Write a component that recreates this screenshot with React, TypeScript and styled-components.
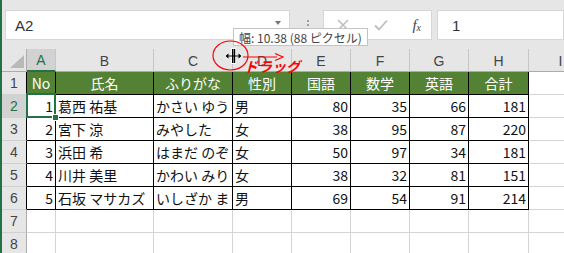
import { FC } from 'react'
import styled, { createGlobalStyle, css } from 'styled-components'

const colors = {
  chrome: '#e6e6e6',
  headActive: '#d2d2d2',
  excelGreen: '#217346',
  fill: '#548235',
  grid: '#d4d4d4',
  headLine: '#ababab',
  text: '#444444',
  red: '#ff0000',
}

const GlobalStyle = createGlobalStyle`
  body {
    margin: 0;
    background: ${colors.chrome};
    overflow: hidden;
  }
`

const columns = ['A', 'B', 'C', 'D', 'E', 'F', 'G', 'H', 'I']
const header = ['No', '氏名', 'ふりがな', '性別', '国語', '数学', '英語', '合計']

interface Student {
  no: number
  name: string
  kana: string
  sex: string
  jp: number
  math: number
  en: number
  total: number
}

const students: Student[] = [
  { no: 1, name: '葛西 祐基', kana: 'かさい ゆう', sex: '男', jp: 80, math: 35, en: 66, total: 181 },
  { no: 2, name: '宮下 涼', kana: 'みやした', sex: '女', jp: 38, math: 95, en: 87, total: 220 },
  { no: 3, name: '浜田 希', kana: 'はまだ のぞ', sex: '女', jp: 50, math: 97, en: 34, total: 181 },
  { no: 4, name: '川井 美里', kana: 'かわい みり', sex: '女', jp: 38, math: 32, en: 81, total: 151 },
  { no: 5, name: '石坂 マサカズ', kana: 'いしざか ま', sex: '男', jp: 69, math: 54, en: 91, total: 214 },
]

const App: FC = () => {
  return (
    <Window>
      <GlobalStyle />
      <FormulaRow>
        <NameBox>
          A2
          <DropArrow />
        </NameBox>
        <Grip>
          <Dot />
          <Dot />
          <Dot />
        </Grip>
        <ButtonBox>
          <svg width="12" height="12" viewBox="0 0 12 12">
            <path d="M1 1 L11 11 M11 1 L1 11" stroke="#bdbdbd" strokeWidth="1.6" fill="none" />
          </svg>
          <svg width="14" height="12" viewBox="0 0 14 12">
            <path d="M1 6.5 L5 10.5 L13 1.5" stroke="#bdbdbd" strokeWidth="1.8" fill="none" />
          </svg>
          <Fx>
            f<sub>x</sub>
          </Fx>
        </ButtonBox>
        <FormulaInput>1</FormulaInput>
      </FormulaRow>

      <Sheet>
        <Corner>
          <CornerTriangle />
        </Corner>
        {columns.map((c) => (
          <ColHead key={c} $active={c === 'A'}>
            {c}
          </ColHead>
        ))}

        <RowHead $edge>1</RowHead>
        {header.map((h) => (
          <Cell key={h} $kind="head">
            {h}
          </Cell>
        ))}
        <Cell $kind="blank" />

        {students.map((s, i) => (
          <Row key={s.no}>
            <RowHead $edge $active={i === 0}>
              {i + 2}
            </RowHead>
            <Cell $kind="data" $num $selected={i === 0}>
              {s.no}
            </Cell>
            <Cell $kind="data">{s.name}</Cell>
            <Cell $kind="data">{s.kana}</Cell>
            <Cell $kind="data">{s.sex}</Cell>
            <Cell $kind="data" $num>
              {s.jp}
            </Cell>
            <Cell $kind="data" $num>
              {s.math}
            </Cell>
            <Cell $kind="data" $num>
              {s.en}
            </Cell>
            <Cell $kind="data" $num>
              {s.total}
            </Cell>
            <Cell $kind="blank" />
          </Row>
        ))}

        {[7, 8].map((n) => (
          <Row key={n}>
            <RowHead>{n}</RowHead>
            {columns.map((c) => (
              <Cell key={c} $kind="blank" />
            ))}
          </Row>
        ))}
      </Sheet>

      <Tooltip>幅: 10.38 (88 ピクセル)</Tooltip>

      <Ring width="37" height="31" viewBox="0 0 37 31">
        <ellipse cx="18.5" cy="15.5" rx="17.5" ry="14.5" stroke={colors.red} strokeWidth="1.2" fill="none" />
      </Ring>

      <DragArrow width="42" height="10" viewBox="0 0 42 10">
        <path d="M0 5 L34 5" stroke={colors.red} strokeWidth="1.2" />
        <path d="M32 1.5 L40 5 L32 8.5" stroke={colors.red} strokeWidth="1.2" fill="none" />
      </DragArrow>

      <ResizeCursor width="19" height="18" viewBox="0 0 19 18">
        <path
          d="M0.5 9 L4.5 5 L4.5 7.7 L7 7.7 L7 1 L12 1 L12 7.7 L14.5 7.7 L14.5 5 L18.5 9 L14.5 13 L14.5 10.3 L12 10.3 L12 17 L7 17 L7 10.3 L4.5 10.3 L4.5 13 Z"
          fill="#fff"
        />
        <rect x="8" y="2" width="1.4" height="14" fill="#000" />
        <rect x="9.8" y="2" width="1.4" height="14" fill="#000" />
        <path d="M1.5 9 L4.5 6.2 L4.5 8.4 L14.5 8.4 L14.5 6.2 L17.5 9 L14.5 11.8 L14.5 9.6 L4.5 9.6 L4.5 11.8 Z" fill="#000" />
      </ResizeCursor>

      <DragLabel>ドラッグ</DragLabel>
    </Window>
  )
}

const Window = styled.div`
  position: relative;
  width: 564px;
  height: 253px;
  overflow: hidden;
  box-sizing: border-box;
  border-left: 2px solid ${colors.excelGreen};
  background: ${colors.chrome};
  font-family: 'Noto Sans CJK JP', 'Noto Sans', sans-serif;
`

const FormulaRow = styled.div`
  display: flex;
  height: 30px;
  margin-top: 10px;
  padding-left: 3px;
`

const Box = styled.div`
  box-sizing: border-box;
  background: #fff;
  border: 1px solid #d6d6d6;
  display: flex;
  align-items: center;
`

const NameBox = styled(Box)`
  width: 285px;
  justify-content: space-between;
  padding: 0 8px 0 9px;
  font-family: 'Liberation Sans', sans-serif;
  font-size: 15px;
  color: #333;
`

const DropArrow = styled.span`
  width: 0;
  height: 0;
  border-left: 3.5px solid transparent;
  border-right: 3.5px solid transparent;
  border-top: 4px solid #777;
  margin-bottom: 4px;
`

const Grip = styled.div`
  width: 31px;
  display: flex;
  flex-direction: column;
  align-items: center;
  justify-content: center;
  gap: 2px;
  padding-left: 2px;
`

const Dot = styled.span`
  width: 2px;
  height: 2px;
  background: #a0a0a0;
`

const ButtonBox = styled(Box)`
  width: 109px;
  padding: 0 8px 0 13px;
  justify-content: space-between;
`

const Fx = styled.span`
  font-family: 'Liberation Serif', serif;
  font-style: italic;
  font-size: 15px;
  color: #444;
  padding-right: 2px;

  sub {
    font-size: 10px;
    vertical-align: -1px;
  }
`

const FormulaInput = styled(Box)`
  flex: 1;
  margin-left: 5px;
  padding-left: 14px;
  font-family: 'Liberation Sans', sans-serif;
  font-size: 15px;
  color: #333;
`

const Sheet = styled.div`
  display: grid;
  grid-template-columns: 25px 29px 98px 79px 59px 59px 59px 59px 60px 64px;
  grid-auto-rows: 23px;
  margin-top: 9px;
`

const Row = styled.div`
  display: contents;
`

const HeadBase = styled.div`
  box-sizing: border-box;
  background: ${colors.chrome};
  display: flex;
  align-items: center;
  justify-content: center;
  font-family: 'Liberation Sans', sans-serif;
  font-size: 14px;
  color: ${colors.text};
`

const Corner = styled(HeadBase)`
  position: relative;
  border-right: 1px solid ${colors.headLine};
  border-bottom: 1px solid ${colors.headLine};
`

const CornerTriangle = styled.span`
  position: absolute;
  right: 2px;
  bottom: 3px;
  width: 0;
  height: 0;
  border-left: 14px solid transparent;
  border-bottom: 13px solid #b9b9b9;
`

const ColHead = styled(HeadBase)<{ $active?: boolean }>`
  border-right: 1px solid #c6c6c6;
  border-bottom: 1px solid ${colors.headLine};
  padding-top: 1px;

  ${({ $active }) =>
    $active &&
    css`
      background: ${colors.headActive};
      color: ${colors.excelGreen};
      border-bottom: 2px solid ${colors.excelGreen};
    `}
`

const RowHead = styled(HeadBase)<{ $active?: boolean; $edge?: boolean }>`
  border-right: 1px solid ${({ $edge }) => ($edge ? '#000' : colors.headLine)};
  border-bottom: 1px solid #d0d0d0;

  ${({ $active }) =>
    $active &&
    css`
      background: ${colors.headActive};
      color: ${colors.excelGreen};
    `}
`

type CellKind = 'head' | 'data' | 'blank'

const Cell = styled.div<{ $kind: CellKind; $num?: boolean; $selected?: boolean }>`
  position: relative;
  box-sizing: border-box;
  display: flex;
  align-items: center;
  justify-content: ${({ $kind, $num }) => ($kind === 'head' ? 'center' : $num ? 'flex-end' : 'flex-start')};
  padding: 0 2px;
  overflow: hidden;
  white-space: nowrap;
  font-family: 'Noto Sans CJK JP', sans-serif;
  font-size: 14px;
  line-height: 1;
  color: ${({ $kind }) => ($kind === 'head' ? '#fff' : '#111')};
  background: ${({ $kind }) => ($kind === 'head' ? colors.fill : '#fff')};
  border-right: 1px solid ${({ $kind }) => ($kind === 'blank' ? colors.grid : '#000')};
  border-bottom: 1px solid ${({ $kind }) => ($kind === 'blank' ? colors.grid : '#000')};

  ${({ $selected }) =>
    $selected &&
    css`
      overflow: visible;

      &::after {
        content: '';
        position: absolute;
        left: -1px;
        top: -2px;
        right: -1px;
        bottom: -1px;
        border: 2px solid ${colors.excelGreen};
        pointer-events: none;
      }

      &::before {
        content: '';
        position: absolute;
        right: -3px;
        bottom: -3px;
        width: 5px;
        height: 5px;
        background: ${colors.excelGreen};
        box-shadow: 0 0 0 1px #fff;
        z-index: 1;
      }
    `}
`

const Tooltip = styled.div`
  position: absolute;
  left: 231px;
  top: 28px;
  box-sizing: border-box;
  height: 18px;
  padding: 0 5px;
  display: flex;
  align-items: center;
  background: #fff;
  border: 1px solid #c4c4c4;
  font-family: 'Noto Sans CJK JP', sans-serif;
  font-size: 12px;
  color: ${colors.text};
  white-space: nowrap;
`

const Ring = styled.svg`
  position: absolute;
  left: 210px;
  top: 40px;
`

const DragArrow = styled.svg`
  position: absolute;
  left: 241px;
  top: 52px;
`

const ResizeCursor = styled.svg`
  position: absolute;
  left: 222px;
  top: 47px;
`

const DragLabel = styled.div`
  position: absolute;
  left: 242px;
  top: 59px;
  font-family: 'Noto Sans CJK JP', sans-serif;
  font-size: 14px;
  font-weight: bold;
  font-style: italic;
  line-height: 1;
  color: ${colors.red};
`

export default App
